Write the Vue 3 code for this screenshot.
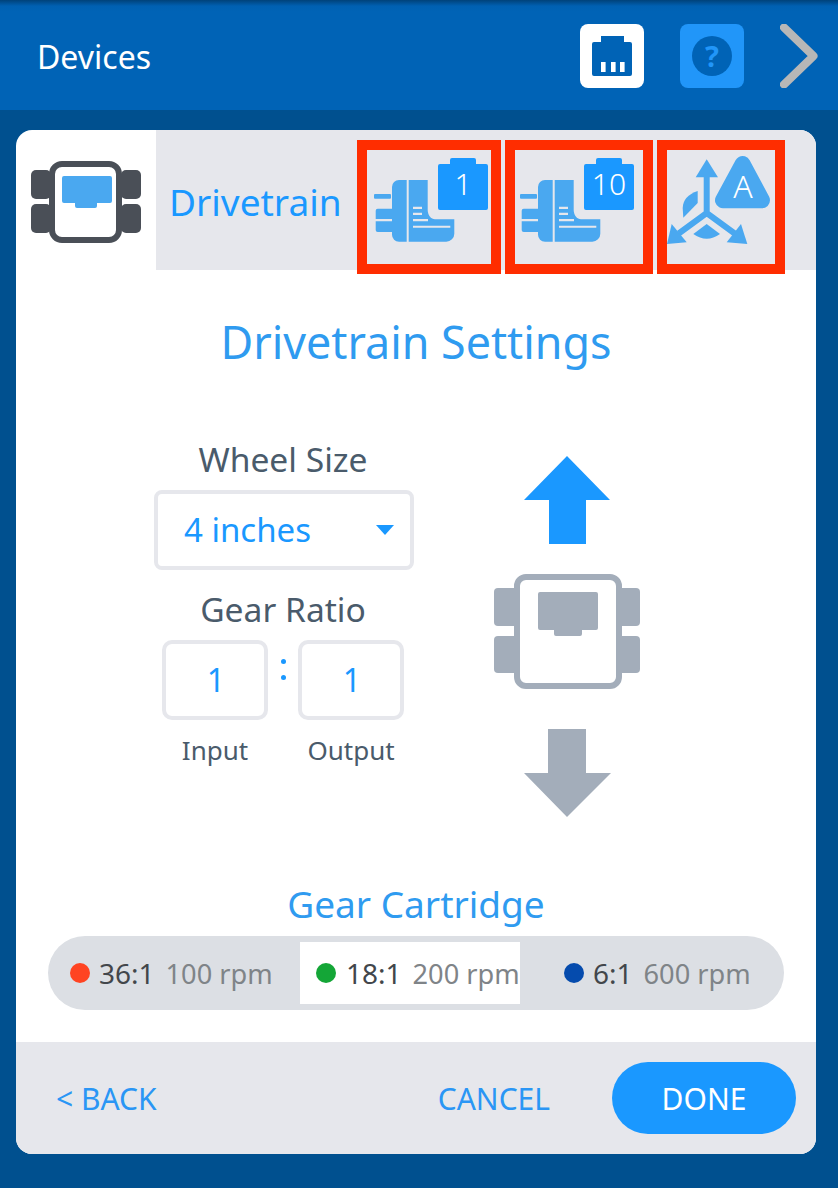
<script setup>
const ratios = [
  { id: 'a', ratio: '36:1', rpm: '100 rpm', color: '#ff4422', cls: 'gear-a' },
  { id: 'b', ratio: '18:1', rpm: '200 rpm', color: '#14a637', cls: 'gear-b' },
  { id: 'c', ratio: '6:1', rpm: '600 rpm', color: '#054bad', cls: 'gear-c' }
]
const motors = [
  { id: 'm1', label: '1', cls: 'box-one' },
  { id: 'm2', label: '10', cls: 'box-two' }
]
</script>

<template>
  <div class="page">
    <header class="header">
      <div class="heading">Devices</div>
      <div class="tool tool-white">
        <svg width="64" height="64" viewBox="0 0 64 64">
          <path fill="#0063b6" d="M21 12h23v6h6a2 2 0 0 1 2 2v30a2 2 0 0 1-2 2H14a2 2 0 0 1-2-2V20a2 2 0 0 1 2-2h7z" />
          <rect x="21" y="38" width="4.6" height="10" fill="#fff" />
          <rect x="31" y="38" width="4.6" height="10" fill="#fff" />
          <rect x="40" y="38" width="4.6" height="10" fill="#fff" />
        </svg>
      </div>
      <div class="tool tool-blue"><span class="help">?</span></div>
      <svg class="chevron" width="38" height="64" viewBox="0 0 38 64">
        <polyline points="4,3.5 33.5,32 4,60.5" fill="none" stroke="#b7b7b7" stroke-width="8" stroke-linecap="round" stroke-linejoin="round" />
      </svg>
    </header>

    <section class="card">
      <div class="strip">
        <div class="strip-icon">
          <svg width="110" height="82" viewBox="0 0 110 82">
            <g fill="#4a4f57">
              <rect x="0" y="9" width="20" height="29" rx="5" />
              <rect x="0" y="43" width="20" height="29" rx="5" />
              <rect x="90" y="9" width="20" height="29" rx="5" />
              <rect x="90" y="43" width="20" height="29" rx="5" />
            </g>
            <rect x="21" y="3" width="67" height="76" rx="10" fill="#fff" stroke="#4a4f57" stroke-width="6" />
            <path fill="#4aa8f0" d="M33 15h46a2 2 0 0 1 2 2v23a2 2 0 0 1-2 2H66v3a2 2 0 0 1-2 2H46a2 2 0 0 1-2-2v-3H33a2 2 0 0 1-2-2V17a2 2 0 0 1 2-2z" />
          </svg>
        </div>
        <div class="strip-rest">
          <div class="strip-title">Drivetrain</div>
          <div v-for="m in motors" :key="m.id" class="red-box" :class="m.cls">
            <svg class="motor" width="124" height="114" viewBox="0 0 124 114">
              <g fill="#4aa8f0">
                <path d="M32 30h7.700v61.700H32a7 7 0 0 1-7-7V37a7 7 0 0 1 7-7z" />
                <path fill-rule="evenodd" d="M41.700 30H60.700V60C60.700 65 64 69.300 68 69.300H87.300V83.700a8 8 0 0 1-8 8H41.700zM46 56.700V59H55V56.700zM46 62.700V65H55V62.700zM46 69V71.300H61V69zM46 75.700V77.700H83.300V75.700z" />
                <rect x="7" y="44" width="17" height="4.700" rx="1" />
                <path d="M10.700 58.700H25V69H8.700V60.700a2 2 0 0 1 2-2z" />
                <path d="M8.700 71.300H25V82H10.700a2 2 0 0 1-2-2z" />
              </g>
              <path fill="#1a98ff" d="M85 8h22a2 2 0 0 1 2 2v4h10a2 2 0 0 1 2 2v42a2 2 0 0 1-2 2H73a2 2 0 0 1-2-2V16a2 2 0 0 1 2-2h10v-4a2 2 0 0 1 2-2z" />
            </svg>
            <span class="badge-num">{{ m.label }}</span>
          </div>
          <div class="red-box box-three">
            <svg class="turn" width="108" height="114" viewBox="0 0 108 114">
              <g fill="#4aa8f0">
                <path d="M39.700 9.300L51 27.300H28.700z" />
                <path d="M0 94L4.700 74L19.700 92.300z" />
                <path d="M80.300 94L74 74L59.700 92.300z" />
                <path d="M30.700 41Q16 46 15.700 58L16.300 67.700L30.700 53z" />
                <path d="M26.300 84L39.700 74L53 84Q39.700 93.400 26.300 84z" />
                <polygon points="75.600,14 56,50.300 95,50.300" stroke="#4aa8f0" stroke-width="16" stroke-linejoin="round" />
              </g>
              <path d="M39.700 25V63M11.700 83.500L39.700 63L67.700 83.500" fill="none" stroke="#4aa8f0" stroke-width="6" />
            </svg>
            <span class="badge-a">A</span>
          </div>
        </div>
      </div>

      <main class="content">
        <h1 class="title">Drivetrain Settings</h1>
        <div class="form-row">
          <div class="form-col">
            <div class="label">Wheel Size</div>
            <div class="select">
              <span>4 inches</span>
              <i class="caret"></i>
            </div>
            <div class="label label-gap">Gear Ratio</div>
            <div class="ratio-row">
              <div class="ratio-field">1</div>
              <div class="colon"><i></i><i></i></div>
              <div class="ratio-field">1</div>
            </div>
            <div class="ratio-captions">
              <span>Input</span>
              <span>Output</span>
            </div>
          </div>
          <svg class="robot" width="155" height="362" viewBox="490 456 155 362">
            <path fill="#1a98ff" d="M567 456L610 500H586V544H549V500H524z" />
            <g fill="#a3adba">
              <rect x="494" y="588" width="24" height="38" rx="4" />
              <rect x="494" y="636" width="24" height="37" rx="4" />
              <rect x="618" y="588" width="22" height="38" rx="4" />
              <rect x="618" y="636" width="22" height="37" rx="4" />
              <path d="M548 729H586V773H611L567 817L524 773H548z" />
            </g>
            <rect x="517" y="577" width="102" height="109" rx="9" fill="#fff" stroke="#a3adba" stroke-width="6" />
            <path fill="#a3adba" d="M540 592h56a2 2 0 0 1 2 2v34a2 2 0 0 1-2 2h-14v4a2 2 0 0 1-2 2h-24a2 2 0 0 1-2-2v-4h-14a2 2 0 0 1-2-2v-34a2 2 0 0 1 2-2z" />
          </svg>
        </div>

        <div class="cart-title">Gear Cartridge</div>
        <div class="pill">
          <div v-for="r in ratios" :key="r.id" class="gear" :class="r.cls">
            <i class="dot" :style="{ background: r.color }"></i>
            <span class="gear-ratio">{{ r.ratio }}</span>
            <span class="gear-rpm">{{ r.rpm }}</span>
          </div>
        </div>
      </main>

      <footer class="footer">
        <div class="link">&lt; BACK</div>
        <div class="link cancel">CANCEL</div>
        <div class="done">DONE</div>
      </footer>
    </section>
  </div>
</template>

<style>
html, body { margin: 0; background: #00508f; }
</style>

<style scoped>
.page {
  width: 838px;
  height: 1188px;
  background: #00508f;
  font-family: "Noto Sans", "Open Sans", sans-serif;
  display: flex;
  flex-direction: column;
  overflow: hidden;
}
.header {
  height: 110px;
  flex: none;
  display: flex;
  align-items: center;
  padding-left: 37px;
  padding-top: 2px;
  box-sizing: border-box;
  background: linear-gradient(#00427a 0, #0060b2 6px, #0063b6 12px);
}
.heading { color: #fff; font-size: 32px; width: 543px; }
.tool {
  width: 64px;
  height: 64px;
  border-radius: 8px;
  display: flex;
  align-items: center;
  justify-content: center;
}
.tool-white { background: #fff; }
.tool-blue { background: #2196f9; margin-left: 36px; }
.help {
  width: 40px;
  height: 40px;
  border-radius: 50%;
  background: #0063b6;
  color: #2196f9;
  font-weight: 700;
  font-size: 29px;
  line-height: 40px;
  text-align: center;
}
.chevron { margin-left: 36px; }
.card {
  margin: 20px 22px 0 16px;
  width: 800px;
  height: 1024px;
  border-radius: 16px;
  background: #fff;
  display: flex;
  flex-direction: column;
  overflow: hidden;
}
.strip { height: 140px; flex: none; display: flex; }
.strip-icon {
  width: 140px;
  flex: none;
  box-sizing: border-box;
  padding: 31px 0 0 15px;
}
.strip-icon svg { display: block; }
.strip-rest {
  flex: 1;
  height: 140px;
  background: #e6e7ec;
  display: flex;
  gap: 4px;
  align-items: flex-start;
}
.strip-title {
  width: 188px;
  margin-right: -4px;
  padding: 47px 0 0 13px;
  font-size: 37px;
  line-height: 50px;
  color: #1a98ff;
}
.red-box {
  position: relative;
  z-index: 2;
  margin-top: 10px;
  height: 134px;
  border: 10px solid #ff2d00;
  box-sizing: border-box;
  flex: none;
}
.box-one { width: 144px; }
.box-two { width: 148px; }
.box-three { width: 128px; }
.motor { display: block; position: absolute; left: 0; top: 0; }
.box-two .motor { left: -2px; }
.turn { display: block; position: absolute; left: 0; top: 0; }
.badge-num {
  position: absolute;
  left: 71px;
  width: 50px;
  top: 12px;
  text-align: center;
  color: #fff;
  font-size: 30px;
  font-weight: 300;
  line-height: 44px;
}
.box-two .badge-num { left: 69px; }
.badge-a {
  position: absolute;
  left: 56px;
  width: 40px;
  top: 14px;
  text-align: center;
  color: #fff;
  font-size: 32px;
  font-weight: 300;
  line-height: 44px;
}
.content { flex: 1; display: flex; flex-direction: column; }
.title {
  margin: 43px 0 2px;
  font-weight: 400;
  font-size: 44.800px;
  line-height: 58px;
  color: #2f9bf0;
  text-align: center;
}
.form-row {
  margin-top: 67px;
  height: 380px;
  padding-left: 138px;
  display: flex;
  gap: 76px;
  align-items: flex-start;
}
.robot { display: block; margin-top: 16px; }
.form-col { width: 260px; display: flex; flex-direction: column; align-items: center; }
.label { font-size: 33.600px; line-height: 38px; color: #4a5b6b; margin: 0 2px 2px 0; }
.label-gap { margin-top: 20px; }
.select {
  margin-top: 10px;
  width: 260px;
  height: 80px;
  box-sizing: border-box;
  border: 4px solid #e6e7ec;
  border-radius: 8px;
  padding: 0 16px 2px 26px;
  display: flex;
  align-items: center;
  justify-content: space-between;
  font-size: 33px;
  color: #1a98ff;
}
.caret {
  width: 0;
  height: 0;
  margin-top: 2px;
  border-left: 9px solid transparent;
  border-right: 9px solid transparent;
  border-top: 10px solid #1a98ff;
}
.ratio-row { margin: 10px 2px 0 0; display: flex; width: 242px; justify-content: space-between; }
.ratio-field {
  width: 106px;
  height: 80px;
  box-sizing: border-box;
  border: 4px solid #e6e7ec;
  border-radius: 10px;
  padding: 0 0 2px 2px;
  display: flex;
  align-items: center;
  justify-content: center;
  font-size: 32px;
  color: #1a98ff;
}
.colon { display: flex; flex-direction: column; gap: 11px; padding-top: 19px; align-items: center; }
.colon i { width: 5px; height: 5px; border-radius: 50%; background: #1a98ff; display: block; }
.ratio-captions {
  margin: 15px 2px 0 0;
  display: flex;
  width: 242px;
  font-size: 26px;
  line-height: 30px;
  color: #4a5b6b;
}
.ratio-captions span { width: 106px; text-align: center; }
.ratio-captions span + span { margin-left: 30px; }
.cart-title {
  margin: 60px 0 2px;
  font-size: 37px;
  line-height: 48px;
  color: #2f9bf0;
  text-align: center;
}
.pill {
  margin: 6px 32px 0;
  height: 74px;
  border-radius: 37px;
  background: #dcdfe4;
  padding: 6px 0;
  box-sizing: border-box;
  display: flex;
}
.gear { display: flex; align-items: center; box-sizing: border-box; white-space: nowrap; }
.gear-a { width: 252px; padding-left: 22px; }
.gear-b { width: 220px; padding-left: 16px; background: #fff; }
.gear-c { width: 264px; padding-left: 44px; }
.dot { width: 20px; height: 20px; border-radius: 50%; flex: none; margin-right: 9px; }
.gear-b .dot { margin-right: 10px; }
.gear-ratio { color: #42464b; margin-right: 11px; font-size: 28px; }
.gear-rpm { color: #7f8488; font-size: 27.200px; }
.footer {
  height: 112px;
  flex: none;
  background: #e6e7ec;
  display: flex;
  align-items: center;
  padding: 0 20px 0 40px;
  font-size: 30px;
}
.link { color: #2a96f5; }
.cancel { margin-left: auto; margin-right: 62px; }
.done {
  width: 184px;
  height: 72px;
  border-radius: 36px;
  background: #1a98ff;
  color: #fff;
  display: flex;
  align-items: center;
  justify-content: center;
}
</style>
